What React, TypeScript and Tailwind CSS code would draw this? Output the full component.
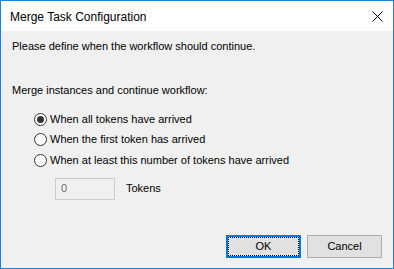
import { useState } from "react";

const font = { fontFamily: '"Liberation Sans", Arial, sans-serif' };

function Radio({ checked, label, onSelect }: { checked: boolean; label: string; onSelect: () => void }) {
    return (
        <div className="flex h-[20.5px] items-center cursor-default" onClick={onSelect}>
            <span className="flex h-[13px] w-[13px] items-center justify-center rounded-full border border-[#333333] bg-white">
                {checked && <span className="h-[7px] w-[7px] rounded-full bg-[#333333]" />}
            </span>
            <span className="ml-[3px] text-[11px] leading-[13px] text-black">{label}</span>
        </div>
    );
}

export default function App() {
    const [mode, setMode] = useState(0);

    const options = [
        "When all tokens have arrived",
        "When the first token has arrived",
        "When at least this number of tokens have arrived",
    ];

    return (
        <div className="flex h-[269px] w-[394px] flex-col border border-[#1883d7] bg-white" style={font}>
            {/* title bar */}
            <div className="flex h-[30px] shrink-0 items-center justify-between bg-white pl-[9px] pr-[9px]">
                <span className="mt-[1px] text-[12px] leading-[14px] text-black">Merge Task Configuration</span>
                <svg width="11" height="11" viewBox="0 0 11 11" className="mr-[1px] mt-[1px]">
                    <path d="M0.5 0.5 L10.5 10.5 M10.5 0.5 L0.5 10.5" stroke="#000" strokeWidth="1" />
                </svg>
            </div>

            {/* body */}
            <div className="flex flex-1 flex-col bg-[#f0f0f0] pl-[11px] pr-[11px] pt-[9px] pb-[10px]">
                <p className="text-[11px] leading-[13px] text-black">Please define when the workflow should continue.</p>
                <p className="mt-[31px] text-[11px] leading-[13px] text-black">Merge instances and continue workflow:</p>

                <div className="ml-[22px] mt-[12px] flex flex-col">
                    {options.map((o, i) => (
                        <Radio key={i} label={o} checked={mode === i} onSelect={() => setMode(i)} />
                    ))}
                </div>

                <div className="ml-[43px] mt-[7px] flex items-center">
                    <div className="flex h-[22px] w-[60px] items-center border border-[#cccccc] bg-[#f0f0f0] pl-[5px] text-[11px] text-[#6d6d6d]">
                        0
                    </div>
                    <span className="ml-[11px] text-[11px] leading-[13px] text-black">Tokens</span>
                </div>

                <div className="mt-auto flex justify-end gap-[6px]">
                    <button className="h-[23px] w-[75px] border-2 border-[#0078d7] bg-[#e1e1e1] text-[11px] text-black outline-1 outline-dotted outline-black -outline-offset-3">
                        OK
                    </button>
                    <button className="h-[23px] w-[75px] border border-[#adadad] bg-[#e1e1e1] text-[11px] text-black">
                        Cancel
                    </button>
                </div>
            </div>
        </div>
    );
}
